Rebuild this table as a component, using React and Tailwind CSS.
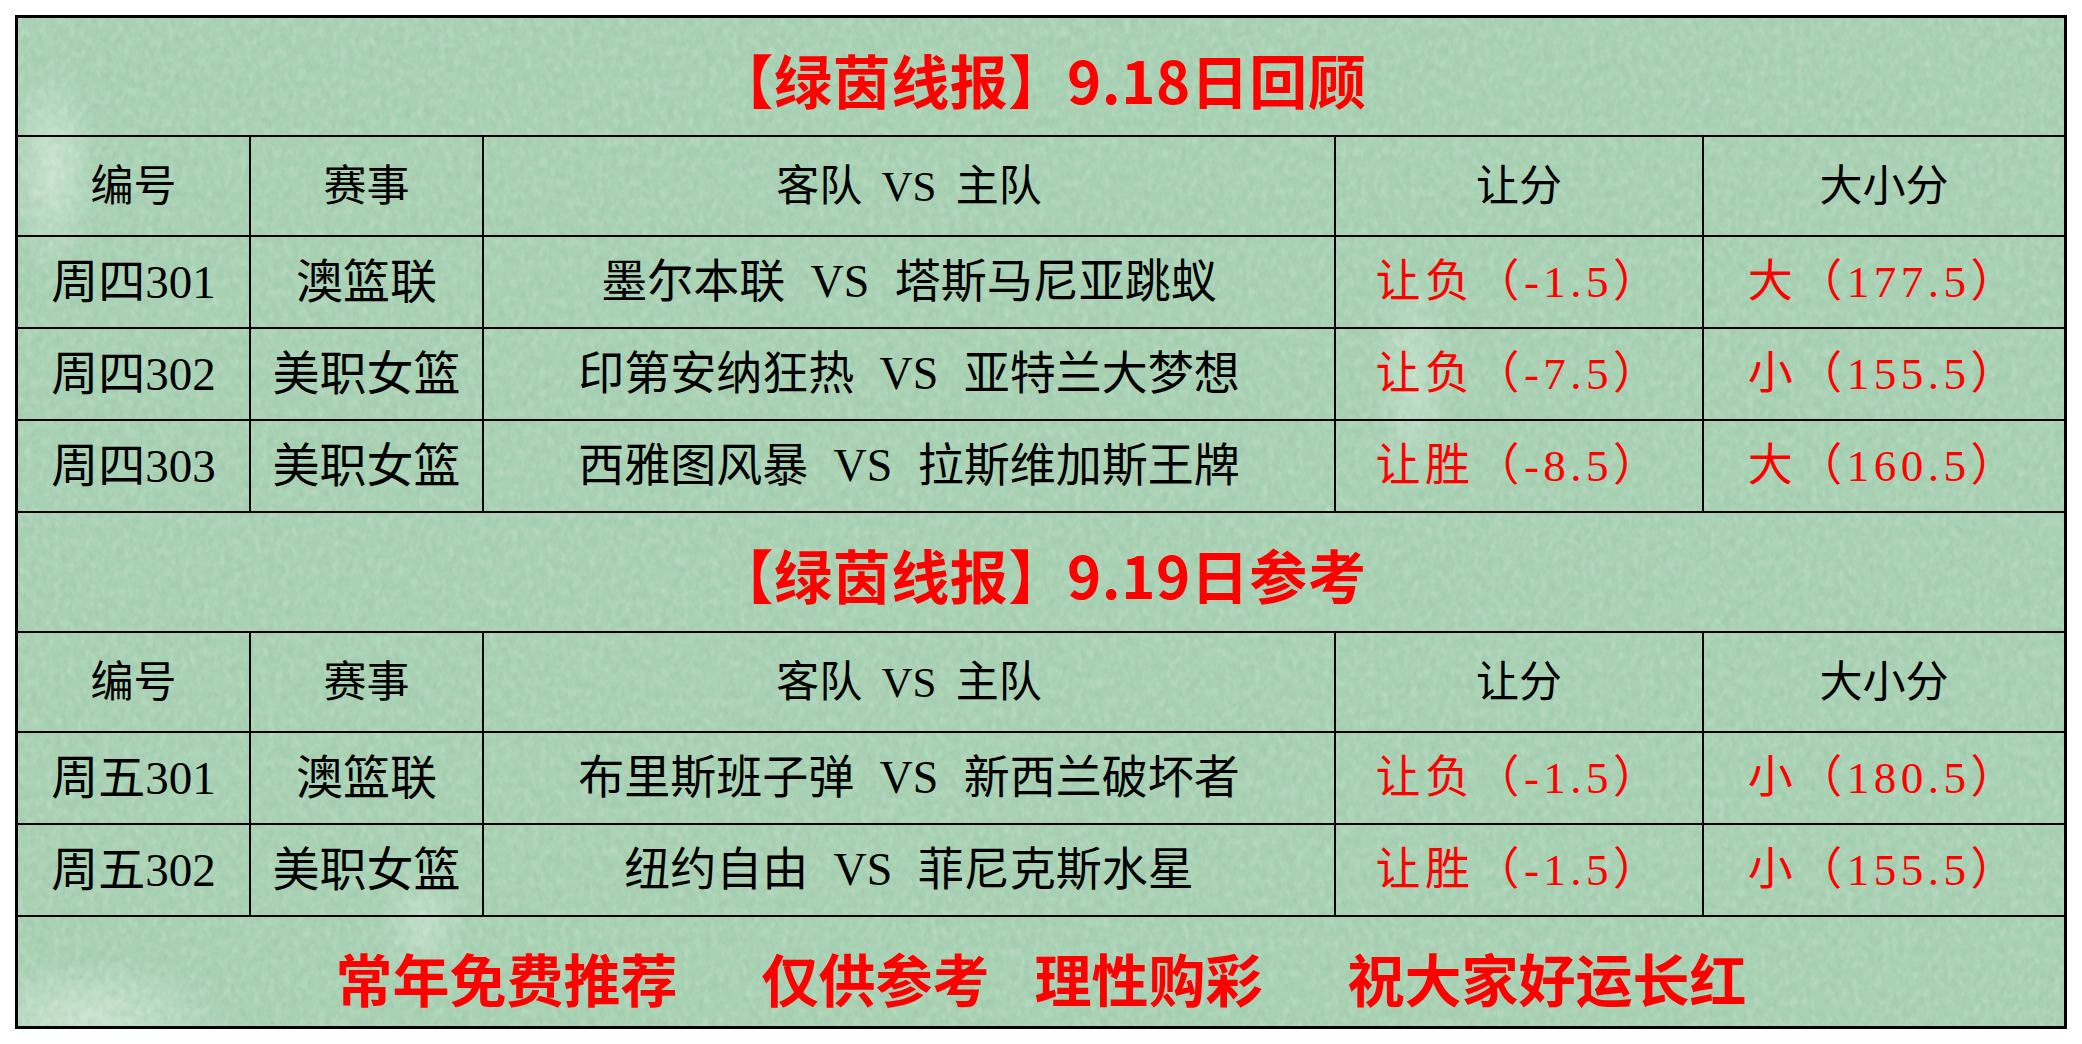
import React from 'react'

const cols = ['w-[233px]', 'w-[233px]', 'w-[852px]', 'w-[368px]', 'w-[360px]']

const header = ['编号', '赛事', '客队 VS 主队', '让分', '大小分']

const review = [
  ['周四301', '澳篮联', '墨尔本联 VS 塔斯马尼亚跳蚁', '让负（-1.5）', '大（177.5）'],
  ['周四302', '美职女篮', '印第安纳狂热 VS 亚特兰大梦想', '让负（-7.5）', '小（155.5）'],
  ['周四303', '美职女篮', '西雅图风暴 VS 拉斯维加斯王牌', '让胜（-8.5）', '大（160.5）'],
]

const picks = [
  ['周五301', '澳篮联', '布里斯班子弹 VS 新西兰破坏者', '让负（-1.5）', '小（180.5）'],
  ['周五302', '美职女篮', '纽约自由 VS 菲尼克斯水星', '让胜（-1.5）', '小（155.5）'],
]

function Title({ children, h }) {
  return (
    <div className={`${h} flex items-center justify-center border-b-2 border-black pt-1`}>
      <h1 className="font-['Noto_Sans_CJK_SC',sans-serif] text-[58px] font-bold leading-none tracking-[0.01em] text-[#ff0000]">
        {children}
      </h1>
    </div>
  )
}

function HeaderRow() {
  return (
    <div className="flex h-[100px] border-b-2 border-black">
      {header.map((text, i) => (
        <div
          key={i}
          className={`${cols[i]} flex items-center justify-center ${i < 4 ? 'border-r-2 border-black' : ''} text-[43px] [word-spacing:0.2em]`}
        >
          {text}
        </div>
      ))}
    </div>
  )
}

function DataRow({ row }) {
  return (
    <div className="flex h-[92px] border-b-2 border-black">
      <div className={`${cols[0]} flex items-center justify-center border-r-2 border-black text-[47px]`}>{row[0]}</div>
      <div className={`${cols[1]} flex items-center justify-center border-r-2 border-black text-[47px]`}>{row[1]}</div>
      <div className={`${cols[2]} flex items-center justify-center border-r-2 border-black text-[46px] [word-spacing:0.3em]`}>
        {row[2]}
      </div>
      <div className={`${cols[3]} flex items-center justify-center border-r-2 border-black text-[45px] tracking-[0.1em] text-[#ff0000]`}>
        {row[3]}
      </div>
      <div className={`${cols[4]} flex items-center justify-center text-[45px] tracking-[0.1em] text-[#ff0000]`}>{row[4]}</div>
    </div>
  )
}

export default function App() {
  return (
    <div className="h-[1044px] w-[2082px] bg-white pl-[15px] pt-[15px]">
      <div className="relative h-[1014px] w-[2052px] border-[3px] border-black bg-[#a9d2b4] bg-[radial-gradient(ellipse_45px_110px_at_35px_150px,rgba(255,255,255,0.4),transparent),radial-gradient(ellipse_40px_120px_at_1395px_360px,rgba(255,255,255,0.3),transparent),radial-gradient(ellipse_140px_60px_at_70px_1000px,rgba(255,255,255,0.4),transparent),radial-gradient(ellipse_45px_60px_at_405px_905px,rgba(255,255,255,0.3),transparent)]">
        {/* paper texture */}
        <svg className="pointer-events-none absolute inset-0 h-full w-full" aria-hidden="true">
          <filter id="paper-dark">
            <feTurbulence type="fractalNoise" baseFrequency="0.16 0.11" numOctaves="2" seed="7" />
            <feColorMatrix type="matrix" values="0 0 0 0 0.25  0 0 0 0 0.4  0 0 0 0 0.3  -1.8 0 0 0 1.05" />
          </filter>
          <filter id="paper-light">
            <feTurbulence type="fractalNoise" baseFrequency="0.14 0.1" numOctaves="2" seed="11" />
            <feColorMatrix type="matrix" values="0 0 0 0 1  0 0 0 0 1  0 0 0 0 1  1.8 0 0 0 -0.8" />
          </filter>
          <rect width="100%" height="100%" filter="url(#paper-dark)" opacity="0.25" />
          <rect width="100%" height="100%" filter="url(#paper-light)" opacity="0.22" />
        </svg>

        <div className="relative flex h-full flex-col font-['Liberation_Serif','Noto_Sans_CJK_SC',serif] leading-none text-black">
          <Title h="h-[119px]">【绿茵线报】9.18日回顾</Title>
          <HeaderRow />
          {review.map((row, i) => (
            <DataRow key={i} row={row} />
          ))}

          <Title h="h-[120px]">【绿茵线报】9.19日参考</Title>
          <HeaderRow />
          {picks.map((row, i) => (
            <DataRow key={i} row={row} />
          ))}

          {/* Footer */}
          <div className="flex flex-1 items-center justify-center pt-3 font-['Noto_Sans_CJK_SC',sans-serif] text-[57px] font-bold text-[#ff0000]">
            <span>常年免费推荐</span>
            <span className="ml-[84px]">仅供参考</span>
            <span className="ml-[45px]">理性购彩</span>
            <span className="ml-[85px]">祝大家好运长红</span>
          </div>
        </div>
      </div>
    </div>
  )
}
